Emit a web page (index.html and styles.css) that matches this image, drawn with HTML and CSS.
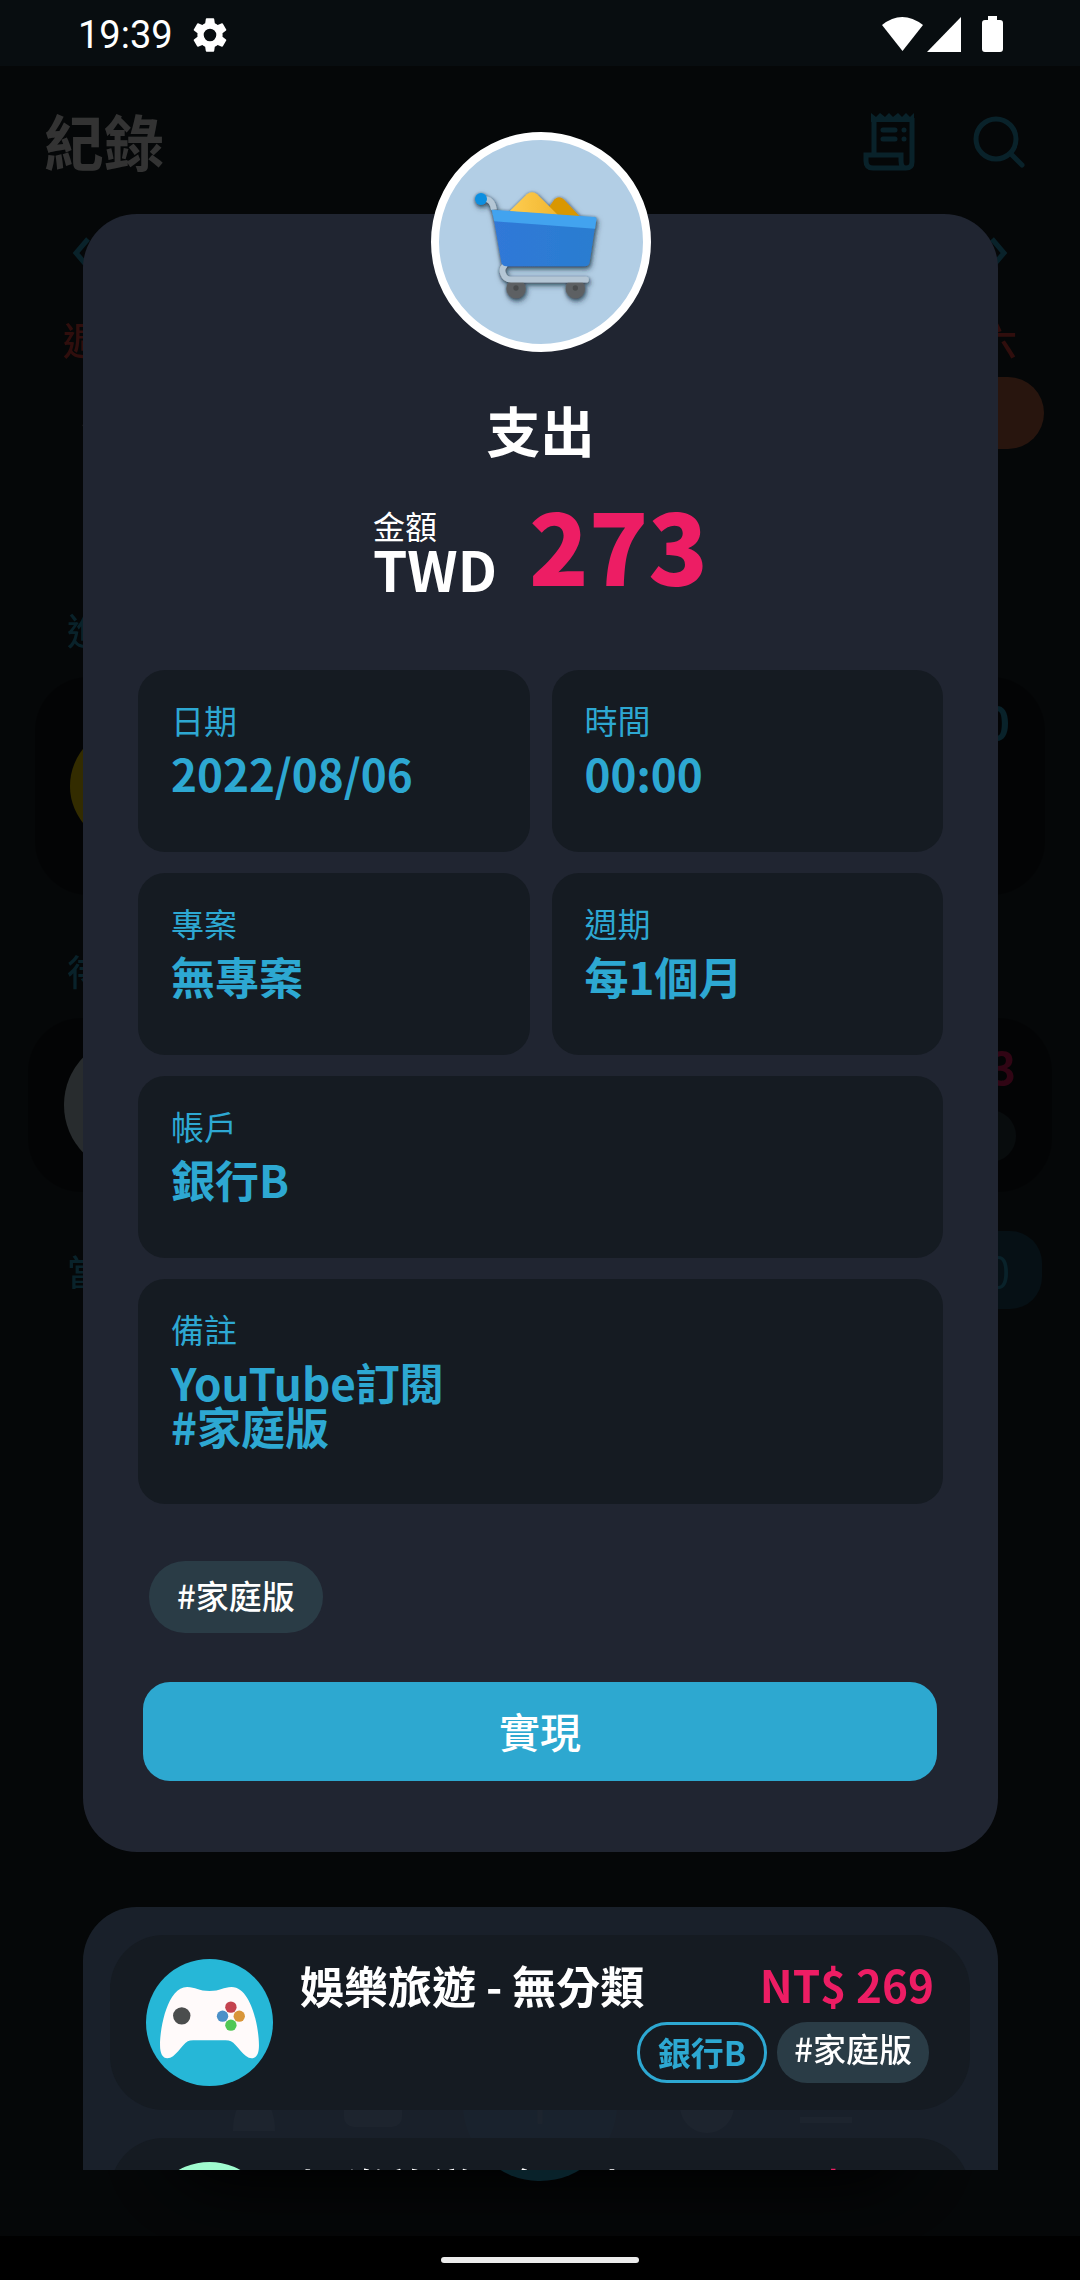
FILE: index.html
```html
<!DOCTYPE html>
<html lang="zh-Hant">
<head>
<meta charset="utf-8">
<meta name="viewport" content="width=device-width, initial-scale=1">
<title>紀錄</title>
<link rel="stylesheet" href="styles.css">
</head>
<body>
<div class="phone">
  <header class="status">
    <div class="status-left">
      <span class="clock">19:39</span>
      <svg class="gear" viewBox="0 0 24 24" aria-hidden="true"><path fill="#fff" d="M19.14 12.94c.04-.3.06-.61.06-.94s-.02-.64-.07-.94l2.03-1.58a.49.49 0 0 0 .12-.61l-1.92-3.32a.49.49 0 0 0-.59-.22l-2.39.96a7 7 0 0 0-1.62-.94l-.36-2.54a.48.48 0 0 0-.48-.41h-3.84a.47.47 0 0 0-.47.41l-.36 2.54c-.59.24-1.13.57-1.62.94l-2.39-.96a.48.48 0 0 0-.59.22L2.74 8.87a.47.47 0 0 0 .12.61l2.03 1.58c-.05.3-.09.63-.09.94s.02.64.07.94l-2.03 1.58a.49.49 0 0 0-.12.61l1.92 3.32c.12.22.37.29.59.22l2.39-.96c.5.38 1.03.7 1.62.94l.36 2.54c.05.24.24.41.48.41h3.84c.24 0 .44-.17.47-.41l.36-2.54a7 7 0 0 0 1.62-.94l2.39.96c.22.08.47 0 .59-.22l1.92-3.32a.47.47 0 0 0-.12-.61zM12 15.6a3.6 3.6 0 1 1 0-7.2 3.6 3.6 0 0 1 0 7.2z"/></svg>
    </div>
    <svg class="signals" viewBox="0 0 122 38" aria-hidden="true" fill="#fff">
      <path d="M0 9Q20 -7 41 9L20.500 35z"/><path d="M79 1V36H45z"/>
      <path d="M106 0h9v4h3q3 0 3 3v26q0 3-3 3h-15q-3 0-3-3V7q0-3 3-3h3z"/>
    </svg>
  </header>

  <main class="screen">
    <div class="topbar">
      <h1>紀錄</h1>
      <div class="actions">
        <button type="button" class="icon-btn" aria-label="收據">
          <svg viewBox="0 0 52 58" fill="none" stroke="#2da8d2" stroke-width="5"><path d="M11 40V5M49 5V49Q49 55 43 55H10Q3 55 3 48V42H38V48Q38 55 43 55"/><path stroke="none" fill="#2da8d2" d="M8 0l5 4 4-4 5 4 4-4 4 4 5-4 4 4 4-4 4 4 4-4v9H8z"/><path stroke-linecap="round" d="M20 17H32M20 26H32M41 17v.1M41 26v.1"/></svg>
        </button>
        <button type="button" class="icon-btn" aria-label="搜尋">
          <svg viewBox="0 0 52 58" fill="none" stroke="#2da8d2" stroke-width="5"><circle cx="23" cy="26" r="20"/><path stroke-linecap="round" d="M38 41L49 52"/></svg>
        </button>
      </div>
    </div>
    <div class="month">
      <button type="button" class="arrow" aria-label="上個月"><svg viewBox="0 0 20 36" fill="none" stroke="#2da8d2" stroke-width="5"><path d="M16 4L4 18L16 32"/></svg></button>
      <button type="button" class="arrow" aria-label="下個月"><svg viewBox="0 0 20 36" fill="none" stroke="#2da8d2" stroke-width="5"><path d="M4 4L16 18L4 32"/></svg></button>
    </div>
    <div class="calendar">
      <span class="weekday">週日</span><span class="weekday">週六</span>
      <span class="day faint">31</span><span class="day today">6</span>
      <span class="day">7</span><span class="day">13</span>
    </div>
    <h2 class="section">進行</h2>
    <div class="entry goal"><span class="disc yellow"></span><span class="num cyan">0</span></div>
    <h2 class="section">待辦</h2>
    <div class="entry pending"><span class="disc pale"></span><span class="side"><span class="num pink">273</span><span class="ghost-chip"></span></span></div>
    <div class="daysum"><h2 class="section">當日</h2><span class="sum">0</span></div>
    <nav class="tabs">
      <svg class="tab" viewBox="0 0 58 58" fill="#fff"><path d="M8 56Q8 28 29 10Q50 28 50 56z"/></svg>
      <svg class="tab" viewBox="0 0 58 58" fill="#fff"><rect y="10" width="58" height="42" rx="10"/></svg>
      <button type="button" class="fab" aria-label="新增"><svg viewBox="0 0 40 40" stroke="#fff" stroke-width="5" stroke-linecap="round"><path d="M20 2V38M2 20H38"/></svg></button>
      <svg class="tab" viewBox="0 0 58 58" fill="#fff"><circle cx="29" cy="31" r="27"/></svg>
      <svg class="tab" viewBox="0 0 58 58" fill="#fff"><path d="M3 10H55V18H3zM3 26H55V34H3zM3 42H55V48H3z"/></svg>
    </nav>
  </main>

  <section class="overlay" role="dialog" aria-labelledby="kind">
    <article class="detail">
      <div class="avatar">
        <svg viewBox="116 91 612 612" aria-hidden="true">
          <defs>
            <linearGradient id="body"><stop stop-color="#3078d8"/><stop offset="1" stop-color="#2a7dd0"/></linearGradient>
            <linearGradient id="gold"><stop stop-color="#ffcd50"/><stop offset="1" stop-color="#f0b630"/></linearGradient>
            <filter id="shade" x="-20%" y="-20%" width="150%" height="150%">
              <feDropShadow dx="0" dy="2" stdDeviation="4" flood-color="#1c2b38" flood-opacity=".7"/>
              <feDropShadow dx="4" dy="8" stdDeviation="8" flood-color="#1c2b38" flood-opacity=".6"/>
            </filter>
          </defs>
          <g filter="url(#shade)">
            <path fill="#d99700" d="M440 300L463 269Q476 257 490 269L540 322H440z"/>
            <path fill="url(#gold)" d="M326 307L380 254Q395 241 410 254L475 318z"/>
            <path fill="none" stroke="#b4c6d5" stroke-width="17" d="M252 268Q276 268 281 300"/>
            <circle cx="242" cy="268" r="18" fill="#108fe0"/>
            <circle cx="347" cy="537" r="29" fill="#5d6163"/><circle cx="525" cy="537" r="29" fill="#5d6163"/>
            <circle cx="347" cy="535" r="8" fill="#484c4e"/><circle cx="525" cy="535" r="8" fill="#484c4e"/>
            <path fill="none" stroke="#b4c6d5" stroke-width="17" stroke-linecap="round" d="M312 469Q303 478 308 491Q314 510 332 510H557"/>
            <path fill="url(#body)" d="M276 302L588 324L568 457Q566 470 553 470H318Q306 470 303 457z"/>
            <path fill="#42a3ef" d="M274 300L582 322Q589 323 588 330L584 357L282 335z"/>
          </g>
        </svg>
      </div>
      <h2 class="kind" id="kind">支出</h2>
      <div class="amount">
        <div class="currency"><span class="label">金額</span><span class="code">TWD</span></div>
        <strong class="value">273</strong>
      </div>
      <dl class="fields">
        <div class="field"><dt>日期</dt><dd>2022/08/06</dd></div>
        <div class="field"><dt>時間</dt><dd>00:00</dd></div>
        <div class="field"><dt>專案</dt><dd>無專案</dd></div>
        <div class="field"><dt>週期</dt><dd>每1個月</dd></div>
        <div class="field wide"><dt>帳戶</dt><dd>銀行B</dd></div>
        <div class="field wide"><dt>備註</dt><dd>YouTube訂閱<br>#家庭版</dd></div>
      </dl>
      <div class="tags"><span class="tag">#家庭版</span></div>
      <button type="button" class="primary">實現</button>
    </article>

    <div class="records">
      <article class="record">
        <svg class="badge" viewBox="77 87 380 380" aria-hidden="true">
          <circle cx="267" cy="277" r="190" fill="#26b7d7"/>
          <path fill="#fffafa" d="M119 345C119 290 142 171 200 171C225 171 235 183 267 183C299 183 309 171 333 171C391 171 415 290 415 345C415 370 408 384 393 384C370 384 350 342 331 333Q325 330 315 330H218Q208 330 202 333C183 344 165 384 141 384C127 384 119 370 119 345z"/>
          <circle cx="184" cy="257" r="26" fill="#4b4d4d"/>
          <circle cx="331" cy="231" r="17" fill="#c4434f"/><circle cx="306" cy="258" r="17" fill="#4b90c8"/>
          <circle cx="356" cy="258" r="17" fill="#d99639"/><circle cx="331" cy="285" r="17" fill="#50c754"/>
        </svg>
        <div class="info">
          <div class="line"><h3>娛樂旅遊 - 無分類</h3><span class="price">NT$ 269</span></div>
          <div class="chips"><span class="chip account">銀行B</span><span class="chip note">#家庭版</span></div>
        </div>
      </article>
      <article class="record">
        <svg class="badge" viewBox="0 0 126 126" aria-hidden="true"><circle cx="63" cy="63" r="63" fill="#a0fccf"/></svg>
        <div class="info">
          <div class="line"><h3>娛樂旅遊 - 無分類</h3><span class="price">NT$ 269</span></div>
        </div>
      </article>
    </div>
  </section>

  <footer class="gesture"><span class="handle"></span></footer>
</div>
</body>
</html>
```
FILE: styles.css
```css
* { box-sizing: border-box; }

body {
  margin: 0;
  background: #000;
  color: #fff;
  font-family: "Noto Sans CJK TC", "Noto Sans", sans-serif;
}

h1, h2, h3, dl, dt, dd { margin: 0; }

button {
  border: 0;
  padding: 0;
  background: none;
  color: inherit;
  font: inherit;
}

svg { display: block; }

.phone {
  position: relative;
  display: flex;
  flex-direction: column;
  height: 100vh;
  overflow: hidden;
}

/* system status bar */
.status {
  display: flex;
  justify-content: space-between;
  align-items: center;
  height: 66px;
  padding: 4px 76px 0 78px;
  background: #080d10;
}
.status-left { display: flex; align-items: center; gap: 16px; }
.clock { font: 38px/44px Roboto, sans-serif; }
.gear { width: 42px; height: 42px; }
.signals { width: 122px; height: 38px; }

/* dimmed page under the dialog */
.screen {
  flex: 1;
  display: flex;
  flex-direction: column;
  background: #1a2328;
  opacity: .2;
}
.topbar {
  display: flex;
  align-items: center;
  justify-content: space-between;
  height: 152px;
  padding: 0 55px 0 44px;
}
.topbar h1 { padding-bottom: 4px; font-size: 60px; line-height: 76px; }
.actions { display: flex; gap: 58px; }
.icon-btn, .icon-btn svg { width: 52px; height: 58px; }
.month {
  display: flex;
  align-items: center;
  justify-content: space-between;
  height: 70px;
  padding: 0 72px;
}
.arrow svg { width: 20px; height: 36px; }
.calendar {
  display: grid;
  grid-template-columns: 146px 146px;
  grid-template-rows: 58px 89px 89px;
  justify-content: space-between;
  align-items: center;
  margin: 22px 28px 0;
  text-align: center;
}
.weekday { color: #f04840; font-size: 38px; font-weight: 500; line-height: 52px; }
.day { font-size: 36px; line-height: 72px; }
.faint { opacity: .4; }
.today { margin: 0 8px; border-radius: 36px; background: #c86946; }
.section { color: #2da8d2; font-size: 36px; font-weight: 500; line-height: 60px; }
.screen > .section { margin: 53px 0 18px 67px; }
.screen > .entry + .section { margin-top: 45px; }
.entry { display: flex; justify-content: space-between; border-radius: 54px; background: #12181c; }
.goal { height: 218px; margin: 0 35px; padding: 14px 35px; align-items: center; }
.pending { height: 174px; margin: 0 28px; padding: 18px 36px 0; }
.disc { width: 118px; height: 118px; border-radius: 50%; }
.yellow { background: #ffdc00; }
.pale { width: 138px; height: 138px; background: #c8dce6; }
.num { font-size: 44px; font-weight: 700; line-height: 60px; }
.cyan { align-self: flex-start; color: #2da8d2; }
.side { display: flex; flex-direction: column; align-items: flex-end; gap: 14px; }
.pink { color: #ed1d64; }
.ghost-chip { width: 150px; height: 52px; border-radius: 26px; background: #2a3c44; }
.daysum { display: flex; justify-content: space-between; align-items: center; margin: 39px 38px 0 67px; }
.sum { padding: 0 32px; border-radius: 32px; background: #1e5069; color: #2da8d2; font-size: 42px; line-height: 78px; }
.tabs {
  display: flex;
  align-items: center;
  justify-content: space-between;
  height: 132px;
  margin: auto 170px 66px;
  padding: 0 55px;
  border-radius: 60px;
  background: #14161a;
  box-shadow: 0 12px 60px #000;
}
.tab { width: 58px; height: 58px; }
.fab {
  display: flex;
  align-items: center;
  justify-content: center;
  width: 154px;
  height: 154px;
  border-radius: 50%;
  background: #2da8d2;
}
.fab svg { width: 40px; height: 40px; }

/* dialog */
.overlay {
  position: absolute;
  inset: 66px 0 110px;
  overflow: hidden;
  padding: 148px 82px 0 83px;
}
.detail {
  display: flex;
  flex-direction: column;
  padding: 0 55px 71px;
  border-radius: 54px;
  background: #202531;
}
.avatar {
  align-self: center;
  margin-top: -82px;
  width: 220px;
  height: 220px;
  border: 8px solid #fff;
  border-radius: 50%;
  background: #b2cee5;
}
.kind { margin-top: 48px; font-size: 54px; line-height: 60px; text-align: center; }
.amount { display: flex; justify-content: center; gap: 32px; margin-top: 47px; }
.currency { display: flex; flex-direction: column; }
.label { font-size: 32px; line-height: 36px; }
.code { font-size: 55px; font-weight: 700; line-height: 50px; }
.value { color: #ed1d64; font-size: 98px; font-weight: 900; line-height: 72px; }

.fields { display: grid; grid-template-columns: 1fr 1fr; gap: 21px 22px; margin-top: 77px; }
.field { min-height: 182px; padding: 28px 33px 56px; border-radius: 27px; background: #151b22; color: #2da8d2; }
.wide { grid-column: 1 / -1; }
.field dt { font-size: 33px; line-height: 44px; }
.field dd { margin-top: 9px; font-size: 44px; font-weight: 700; line-height: 44px; }

.tags { display: flex; margin: 57px 11px 0; }
.tag { padding: 0 28px; border-radius: 36px; background: #2a3c46; font-size: 33px; font-weight: 500; line-height: 68px; height: 72px; }
.primary {
  height: 99px;
  margin: 49px 6px 0 5px;
  padding-bottom: 4px;
  border-radius: 27px;
  background: #2da8d0;
  font-size: 41px;
  font-weight: 500;
}

.records { margin-top: 55px; padding: 28px 28px 28px 27px; border-radius: 54px 54px 0 0; background: rgba(27, 35, 46, .92); }
.record {
  display: flex;
  gap: 27px;
  height: 175px;
  padding: 24px 36px;
  border-radius: 54px;
  background: #151b22;
}
.record + .record { margin-top: 28px; }
.badge { flex: none; width: 127px; height: 127px; }
.info { flex: 1; }
.line { display: flex; justify-content: space-between; }
.line h3, .price { font-size: 44px; line-height: 52px; white-space: nowrap; }
.price { color: #ed1d64; font-weight: 700; line-height: 50px; }
.chips { display: flex; justify-content: flex-end; gap: 10px; margin: 11px 5px 0; }
.chip { height: 61px; border-radius: 30px; font-size: 33px; font-weight: 500; }
.account { padding: 0 18px; border: 3px solid #2da8d2; color: #2da8d2; font-weight: 700; line-height: 54px; }
.note { padding: 0 17px; background: #2a3c46; line-height: 52px; }

/* system gesture bar */
.gesture { display: flex; justify-content: center; align-items: center; height: 44px; padding-top: 4px; }
.handle { width: 198px; height: 6px; border-radius: 3px; background: #ebebeb; }
```
